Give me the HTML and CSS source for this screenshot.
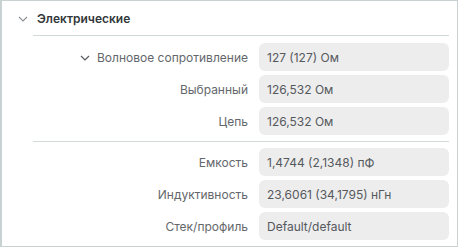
FILE: index.html
```html
<!DOCTYPE html>
<html lang="ru">
<head>
<meta charset="utf-8">
<link rel="stylesheet" href="styles.css">
</head>
<body>
<div class="panel">
  <div class="header">
    <svg class="chev-h" width="10" height="6" viewBox="0 0 10 6"><path d="M1 1 L5 5 L9 1" fill="none" stroke="#8a8f93" stroke-width="1.1"/></svg>
    <span class="title">Электрические</span>
  </div>
  <div class="body">
    <div class="group">
      <div class="row">
        <div class="label"><svg class="chev-r" width="10" height="6" viewBox="0 0 10 6"><path d="M1 1 L5 5 L9 1" fill="none" stroke="#555a5e" stroke-width="1.2"/></svg>Волновое сопротивление</div>
        <div class="value">127 (127) Ом</div>
      </div>
      <div class="row">
        <div class="label">Выбранный</div>
        <div class="value">126,532 Ом</div>
      </div>
      <div class="row">
        <div class="label">Цепь</div>
        <div class="value">126,532 Ом</div>
      </div>
    </div>
    <div class="group">
      <div class="row">
        <div class="label">Емкость</div>
        <div class="value">1,4744 (2,1348) пФ</div>
      </div>
      <div class="row">
        <div class="label">Индуктивность</div>
        <div class="value">23,6061 (34,1795) нГн</div>
      </div>
      <div class="row">
        <div class="label">Стек/профиль</div>
        <div class="value">Default/default</div>
      </div>
    </div>
  </div>
</div>
</body>
</html>
```

FILE: styles.css
```css
html, body {
  margin: 0;
  padding: 0;
  background: #ffffff;
}
body {
  font-family: Inter, "Noto Sans", sans-serif;
  font-size: 12px;
  color: #5a5e62;
}
.panel {
  box-sizing: border-box;
  width: 458px;
  height: 247px;
  border: 1px solid #c9d2d2;
  border-left-width: 2px;
  display: flex;
  flex-direction: column;
}
.header {
  height: 34px;
  display: flex;
  align-items: center;
  padding-left: 16px;
}
.chev-h {
  margin-right: 9px;
  margin-top: 1px;
}
.title {
  font-weight: 600;
  font-size: 12px;
  color: #33373a;
}
.body {
  margin-left: 31px;
  margin-right: 8px;
  border-top: 1px solid #d3d9d9;
}
.group {
  display: flex;
  flex-direction: column;
  gap: 4px;
  padding: 7px 0 6px;
}
.group + .group {
  border-top: 1px solid #d3d9d9;
  padding-top: 6px;
}
.row {
  display: flex;
  align-items: center;
  gap: 11px;
}
.label {
  width: 215px;
  display: flex;
  justify-content: flex-end;
  align-items: center;
  color: #63676b;
  white-space: nowrap;
}
.chev-r {
  margin-right: 7px;
  margin-top: 1px;
}
.value {
  box-sizing: border-box;
  width: 190px;
  height: 28px;
  background: #ededed;
  border-radius: 6px;
  padding-left: 8px;
  display: flex;
  align-items: center;
  color: #55595d;
}
```
